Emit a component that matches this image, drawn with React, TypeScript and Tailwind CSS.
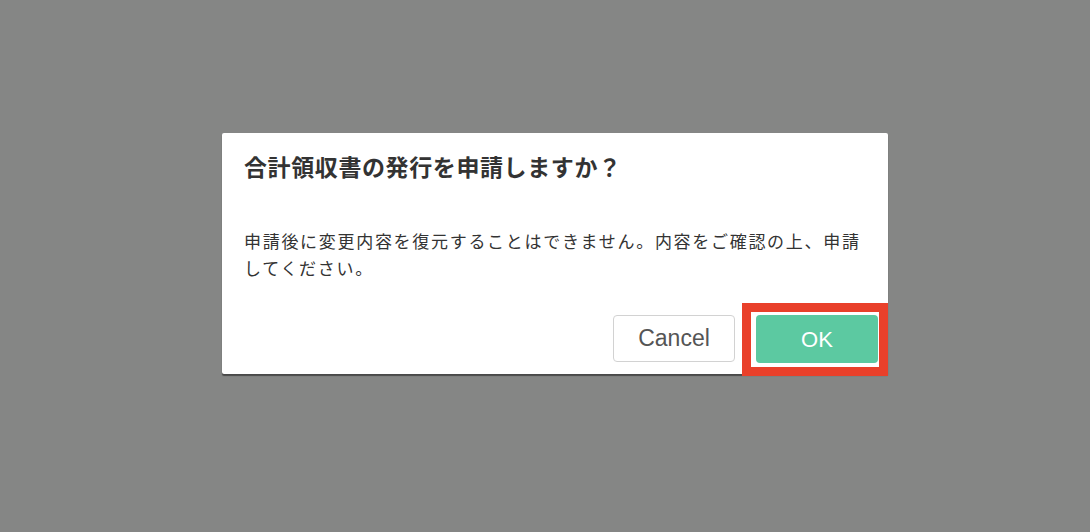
export default function App() {
  return (
    <div
      className="min-h-screen w-full bg-[#858685] pl-[222px] pt-[133px]"
      style={{ fontFamily: '"Liberation Sans", "Noto Sans CJK JP", sans-serif' }}
    >
      {/* Confirm dialog */}
      <div className="w-[666px] rounded-[2px] bg-white shadow-[0_2px_1px_rgba(0,0,0,0.45)]">
        <div className="px-[22px] pt-[19px]">
          <h2 className="text-[23px] font-bold leading-[32px] tracking-[0.6px] text-[#333]">
            合計領収書の発行を申請しますか？
          </h2>
        </div>

        <div className="px-[22px] pt-[45px]">
          <p className="text-[17px] leading-[27px] tracking-[1.7px] text-[#333]">
            申請後に変更内容を復元することはできません。内容をご確認の上、申請
            <br />
            してください。
          </p>
        </div>

        <div className="flex justify-end gap-[21px] pt-[32px] pr-[10px] pb-[11px]">
          <button
            type="button"
            className="mb-px h-[47px] w-[122px] rounded-[4px] border border-[#d2d2d2] bg-white text-[23px] text-[#555]"
          >
            Cancel
          </button>
          <div className="relative">
            <button
              type="button"
              className="h-[48px] w-[122px] rounded-[4px] bg-[#5cc9a1] text-[22px] text-white"
            >
              OK
            </button>
            {/* highlight annotation */}
            <span className="pointer-events-none absolute -top-[12px] -right-[10px] -bottom-[13px] -left-[14px] border-[9px] border-[#e9402a]" />
          </div>
        </div>
      </div>
    </div>
  )
}
